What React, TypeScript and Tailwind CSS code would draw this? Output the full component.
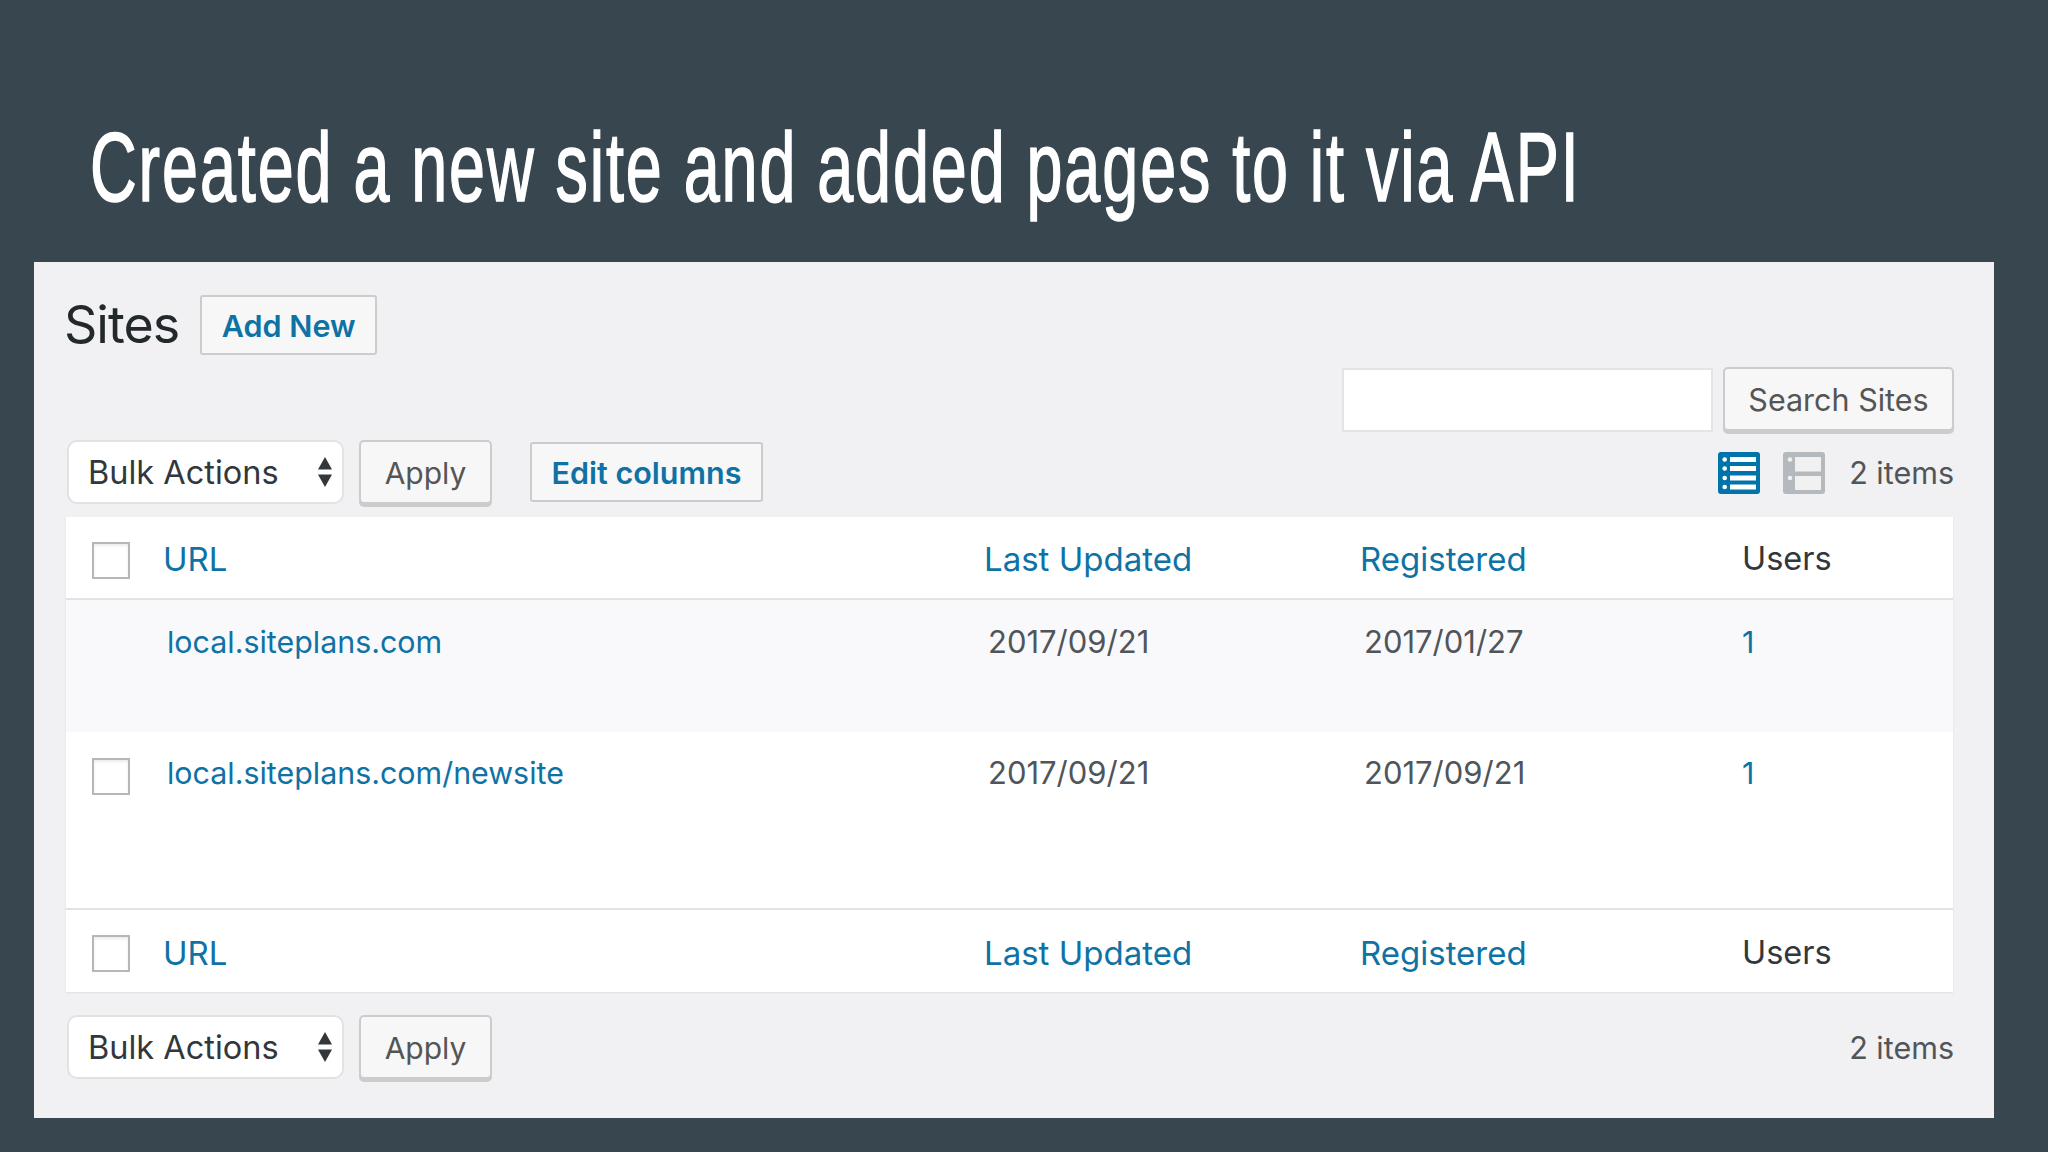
import React from "react";

const uiFont = "font-['Inter','Liberation_Sans',sans-serif]";

const ListIcon = () => (
  <svg width="42" height="42" viewBox="0 0 42 42">
    <rect width="42" height="42" rx="3" fill="#0073aa" />
    <rect x="12" y="5" width="26" height="5" fill="#fff" />
    <rect x="12" y="14" width="26" height="5" fill="#fff" />
    <rect x="12" y="23.5" width="26" height="5" fill="#fff" />
    <rect x="12" y="32.5" width="26" height="5" fill="#fff" />
    <circle cx="6.7" cy="7.5" r="2.3" fill="#fff" />
    <circle cx="6.7" cy="16.5" r="2.3" fill="#fff" />
    <circle cx="6.7" cy="26" r="2.3" fill="#fff" />
    <circle cx="6.7" cy="35" r="2.3" fill="#fff" />
  </svg>
);

const ExcerptIcon = () => (
  <svg width="42" height="42" viewBox="0 0 42 42">
    <rect width="42" height="42" rx="3" fill="#b4b9be" />
    <rect x="12" y="5" width="26" height="14.5" fill="#f1f1f1" />
    <rect x="12" y="24" width="26" height="14" fill="#f1f1f1" />
    <circle cx="7" cy="7.5" r="2.3" fill="#f1f1f1" />
    <circle cx="7" cy="26" r="2.3" fill="#f1f1f1" />
  </svg>
);

const Arrows = () => (
  <svg width="16" height="30" viewBox="0 0 16 30" className="shrink-0">
    <path d="M8 0 L15 12.5 L1 12.5 Z" fill="#32373c" />
    <path d="M1 17.5 L15 17.5 L8 30 Z" fill="#32373c" />
  </svg>
);

const Checkbox = () => (
  <div className="w-[38px] h-[37px] border-2 border-[#b7b7b7] bg-white shadow-[inset_0_2px_3px_rgba(0,0,0,0.08)]" />
);

const Actions = () => (
  <div className="flex items-start ml-[1px]">
    <div className="w-[277px] h-[64px] flex items-center justify-between pl-[19px] pr-[9px] bg-white border-2 border-[#e2e2e2] rounded-[10px] text-[#32373c] text-[32.5px]">
      <span className="pt-[2px]">Bulk Actions</span>
      <Arrows />
    </div>
    <button className="ml-[15px] w-[133px] h-[64px] pt-[2px] bg-[#f7f7f7] border-2 border-[#cccccc] rounded-[5px] shadow-[0_3px_0_#cccccc] text-[#555555] text-[30px]">
      Apply
    </button>
  </div>
);

const HeadRow = ({ border }: { border: string }) => (
  <div className={`grid grid-cols-[97px_821px_376px_382px_1fr] items-center text-[33px] leading-[50px] pt-[3px] ${border}`}>
    <div className="pl-[26px] pt-[2px]">
      <Checkbox />
    </div>
    <span className="text-[#0f72a5]">URL</span>
    <span className="text-[#0f72a5]">Last Updated</span>
    <span className="text-[#0f72a5]">Registered</span>
    <span className="text-[#32373c] text-[32.5px]">Users</span>
  </div>
);

const SiteRow = ({ url, updated, registered, check, rowClass }: { url: string; updated: string; registered: string; check: boolean; rowClass: string }) => (
  <div className={`grid grid-cols-[97px_821px_376px_382px_1fr] items-start text-[30.4px] leading-[46px] ${rowClass}`}>
    <div className="pl-[26px] pt-[8px] h-[46px]">{check && <Checkbox />}</div>
    <span className="pl-[4px] text-[#0f72a5]">{url}</span>
    <span className="pl-[4px] text-[#50555a] text-[31px]">{updated}</span>
    <span className="pl-[4px] text-[#50555a] text-[31px]">{registered}</span>
    <span className="text-[#0f72a5]">1</span>
  </div>
);

export default function App() {
  return (
    <div className={`w-[2048px] h-[1152px] overflow-hidden bg-[#38474f] ${uiFont} text-[30.5px]`}>
      <div className="h-[262px] pl-[90px] pt-[105px]">
        <h1 className="font-['Liberation_Sans',sans-serif] text-[98px] leading-[124px] tracking-[2.9px] text-white whitespace-nowrap origin-left scale-x-[0.66] w-fit [-webkit-text-stroke:1.6px_white]">
          Created a new site and added pages to it via API
        </h1>
      </div>

      <div className="ml-[34px] w-[1960px] h-[856px] bg-[#f1f0f2] pl-[32px] pr-[40px] pt-[33px]">
        <div className="flex items-center h-[59px]">
          <span className="text-[52px] leading-none tracking-[-1px] text-[#23282d] ml-[-2px]">Sites</span>
          <button className="ml-[21px] w-[177px] h-[60px] pt-[2px] bg-[#f7f7f7] border-2 border-[#cccccc] rounded-[3px] font-semibold text-[#0f72a5]">
            Add New
          </button>
        </div>

        <div className="flex justify-end mt-[13px] h-[67px]">
          <div className="w-[371px] h-[64px] mt-[1px] bg-white border-2 border-[#e4e4e4]" />
          <button className="ml-[10px] w-[231px] h-[64px] pt-[2px] bg-[#f7f7f7] border-2 border-[#cccccc] rounded-[5px] shadow-[0_3px_0_#cccccc] text-[#555555]">
            Search Sites
          </button>
        </div>

        <div className="flex items-start justify-between mt-[6px] h-[67px]">
          <div className="flex items-start">
            <Actions />
            <button className="ml-[38px] mt-[2px] w-[233px] h-[60px] pt-[2px] bg-[#f7f7f7] border-2 border-[#cccccc] rounded-[3px] font-semibold text-[#0f72a5]">
              Edit columns
            </button>
          </div>
          <div className="flex items-center mt-[12px] h-[42px]">
            <ListIcon />
            <div className="ml-[23px]">
              <ExcerptIcon />
            </div>
            <span className="ml-[24px] text-[#50555a]">2 items</span>
          </div>
        </div>

        <div className="mt-[10px] mr-[1px] bg-white shadow-[0_1px_2px_rgba(0,0,0,0.08)]">
          <HeadRow border="h-[83px] border-b-2 border-[#e3e3e3]" />
          <SiteRow
            url="local.siteplans.com"
            updated="2017/09/21"
            registered="2017/01/27"
            check={false}
            rowClass="h-[132px] pt-[19px] bg-[#f9f9fb]"
          />
          <SiteRow
            url="local.siteplans.com/newsite"
            updated="2017/09/21"
            registered="2017/09/21"
            check
            rowClass="h-[176px] pt-[18px]"
          />
          <HeadRow border="h-[84px] border-t-2 border-[#e3e3e3]" />
        </div>

        <div className="flex items-start justify-between mt-[23px]">
          <Actions />
          <span className="mt-[10px] text-[#50555a]">2 items</span>
        </div>
      </div>
    </div>
  );
}
